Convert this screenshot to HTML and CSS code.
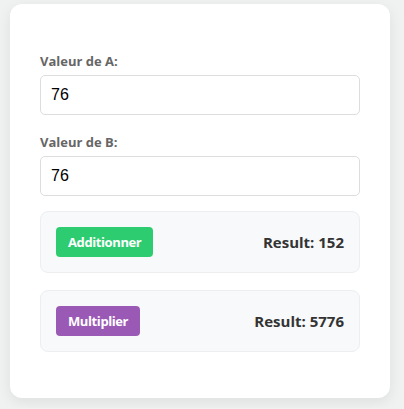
FILE: index.html
```html
<!DOCTYPE html>
<html lang="fr">
<head>
<meta charset="utf-8">
<title>Calculatrice</title>
<link rel="stylesheet" href="styles.css">
</head>
<body>
<div class="card">
  <div class="group">
    <label class="label" for="a">Valeur de A:</label>
    <input class="field" id="a" type="number" value="76">
  </div>
  <div class="group">
    <label class="label" for="b">Valeur de B:</label>
    <input class="field" id="b" type="number" value="76">
  </div>
  <div class="op op-first">
    <button class="btn btn-add">Additionner</button>
    <span class="result">Result: 152</span>
  </div>
  <div class="op op-second">
    <button class="btn btn-mul">Multiplier</button>
    <span class="result">Result: 5776</span>
  </div>
</div>
</body>
</html>
```
FILE: styles.css
```css
html, body {
  margin: 0;
  background: #f0f2f1;
}
body {
  padding: 4px 14px 10px 10px;
  font-family: "Open Sans", "Noto Sans", sans-serif;
}
.card {
  width: 380px;
  box-sizing: border-box;
  background: #fff;
  border-radius: 12px;
  padding: 48px 30px 46px 30px;
  box-shadow: 0 4px 14px rgba(0, 0, 0, 0.08);
}
.group {
  margin-bottom: 18px;
}
.label {
  display: block;
  font-size: 13px;
  line-height: 18px;
  font-weight: 700;
  color: #666;
  margin-bottom: 5px;
}
.field {
  display: block;
  width: 100%;
  box-sizing: border-box;
  height: 40px;
  border: 1px solid #ddd;
  border-radius: 5px;
  padding: 0 10px;
  font-family: "Liberation Sans", Arial, sans-serif;
  font-size: 16px;
  color: #000;
  outline: none;
  -moz-appearance: textfield;
}
.field::-webkit-outer-spin-button,
.field::-webkit-inner-spin-button {
  -webkit-appearance: none;
  margin: 0;
}
.op {
  display: flex;
  align-items: center;
  justify-content: space-between;
  background: #f8f9fa;
  border: 1px solid #eceeef;
  border-radius: 8px;
  padding: 15px;
}
.op-first {
  margin-top: -3px;
}
.op-second {
  margin-top: 17px;
}
.btn {
  height: 30px;
  padding: 0 12px;
  border: none;
  border-radius: 4px;
  color: #fff;
  font-family: "Open Sans", "Noto Sans", sans-serif;
  font-size: 13px;
  font-weight: 700;
  line-height: 30px;
  letter-spacing: -0.4px;
  cursor: pointer;
}
.btn-add {
  background: #2ecc71;
}
.btn-mul {
  background: #9b59b6;
}
.result {
  font-size: 15px;
  font-weight: 700;
  color: #333;
}
```
